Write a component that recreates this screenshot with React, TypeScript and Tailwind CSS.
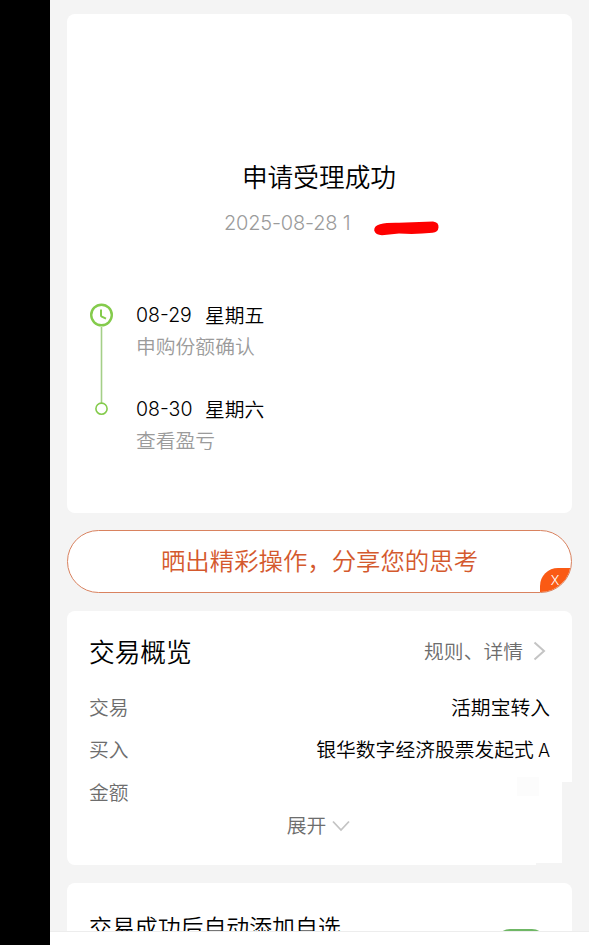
const steps = [
  { date: '08-29', day: '星期五', text: '申购份额确认' },
  { date: '08-30', day: '星期六', text: '查看盈亏' },
]

const rows = [
  { label: '交易', value: '活期宝转入' },
  { label: '买入', value: '银华数字经济股票发起式', suffix: 'A' },
  { label: '金额', value: '' },
]

function Timeline() {
  return (
    <svg width="24" height="118" viewBox="0 0 24 118" fill="none" className="mt-[3px] shrink-0">
      <line x1="12.5" y1="24" x2="12.5" y2="100" stroke="#a4cf88" strokeWidth="1.6" />
      <circle cx="12.5" cy="12" r="10.3" stroke="#84cb4c" strokeWidth="2.4" />
      <path d="M12 6.6V12.4Q12 13.2 12.8 13.6L17 15.6" stroke="#84cb4c" strokeWidth="2" />
      <circle cx="12.5" cy="105.700" r="5.6" fill="#fff" stroke="#84cb4c" strokeWidth="1.6" />
    </svg>
  )
}

function ResultCard() {
  return (
    <section className="h-[499px] rounded-lg bg-white pt-[142px]">
      <h1 className="pr-px text-center text-[25.7px] leading-10 text-black">申请受理成功</h1>
      <div className="mt-[7px] flex h-10 items-center pl-[157px] text-[#9b9b9b]">
        <span className="w-[128px] font-[Inter] text-[20px] font-light tracking-[-0.2px] whitespace-nowrap">2025-08-28 1</span>
        <svg width="68" height="18" viewBox="0 0 68 18" className="mt-[9px] ml-[21px]">
          <path
            d="M7 5.200Q14 3.500 26 3.800L60 2.500Q66 3.200 65.500 8.500Q65 13.500 59.500 13.800Q44 15.600 26 14.600L9 16.200Q2.500 16 1.200 11.500Q1 6.600 7 5.200Z"
            fill="#fe0000"
          />
        </svg>
      </div>
      <div className="mt-[57px] flex pl-[22px]">
        <Timeline />
        <div className="ml-[23px] flex flex-col gap-[33px]">
          {steps.map((s) => (
            <div key={s.date} className="text-[19.8px]">
              <div className="flex h-[31px] items-center gap-3 text-black">
                <span className="w-[57px] font-[Inter] text-[19.5px] leading-[31px]">{s.date}</span>
                <span className="pb-0.5 leading-[29px]">{s.day}</span>
              </div>
              <div className="h-[30px] leading-[30px] text-[#9b9b9b]">{s.text}</div>
            </div>
          ))}
        </div>
      </div>
    </section>
  )
}

function ShareBanner() {
  return (
    <div className="relative mt-[17px] flex h-[63px] items-center justify-center overflow-hidden rounded-full border border-[#d9825f] bg-white pb-[3px] text-[24.4px] text-[#d4592d]">
      晒出精彩操作，分享您的思考
      <span className="absolute -right-px -bottom-px flex h-[25px] w-[32px] items-center justify-center rounded-tl-[18px] bg-[#fa5a14] pr-0.5 font-[Inter] text-[13px] font-light text-white">
        X
      </span>
    </div>
  )
}

function OverviewCard() {
  return (
    <section className="relative mt-[18px] h-[254px] rounded-lg bg-white px-[22px] pt-[20px]">
      <div className="flex h-10 items-center justify-between">
        <h2 className="text-[25.7px] text-black">交易概览</h2>
        <div className="flex items-center pr-1 text-[19.8px] text-[#6d6d6d]">
          规则、详情
          <svg width="13" height="20" viewBox="0 0 13 20" fill="none" className="ml-2.5">
            <path d="M1.5 1.5L11 10L1.5 18.5" stroke="#c4c4c4" strokeWidth="2" />
          </svg>
        </div>
      </div>
      <div className="mt-[15px] text-[19.8px]">
        {rows.map((r) => (
          <div key={r.label} className="flex h-[42.2px] items-center justify-between">
            <span className="text-[#6d6d6d]">{r.label}</span>
            <span className="flex items-center text-black">
              {r.value}
              {r.suffix && <span className="ml-1 pt-[3px] font-[Inter] text-[18px]">{r.suffix}</span>}
            </span>
          </div>
        ))}
      </div>
      <div className="flex h-6 items-center justify-center pr-0.5 text-[19.8px] leading-6 text-[#6d6d6d]">
        展开
        <svg width="18" height="12" viewBox="0 0 18 12" fill="none" className="mt-0.5 ml-[6px]">
          <path d="M1 1.5L9 10L17 1.5" stroke="#c4c4c4" strokeWidth="1.8" />
        </svg>
      </div>
      <span className="absolute top-[171px] right-0 h-[83px] w-[10px] bg-[#f4f4f4]" />
      <span className="absolute right-0 bottom-0 h-[2px] w-[36px] bg-[#f4f4f4]" />
      <span className="absolute top-[166px] right-[33px] h-[19px] w-[22px] bg-[#fcfcfc]" />
    </section>
  )
}

function WatchlistCard() {
  return (
    <section className="mt-[18px] flex h-[48px] items-start justify-between overflow-hidden rounded-t-lg bg-white pr-[26px] pl-[22px]">
      <span className="mt-[25px] text-[22.9px] leading-[36px] whitespace-nowrap text-black">交易成功后自动添加自选</span>
      <span className="mt-[46px] h-[28px] w-[50px] shrink-0 rounded-full bg-[#6fb765]" />
    </section>
  )
}

export default function App() {
  return (
    <div className="flex h-[945px] w-[589px] overflow-hidden bg-[#f4f4f4] font-['Noto_Sans_CJK_SC',sans-serif] font-[350]">
      <div className="w-[50px] shrink-0 bg-black" />
      <div className="flex flex-1 flex-col">
        <main className="h-[931px] overflow-hidden px-[17px] pt-[14px]">
          <ResultCard />
          <ShareBanner />
          <OverviewCard />
          <WatchlistCard />
        </main>
        <footer className="h-[14px] border-t border-[#ededed] bg-white" />
      </div>
    </div>
  )
}
